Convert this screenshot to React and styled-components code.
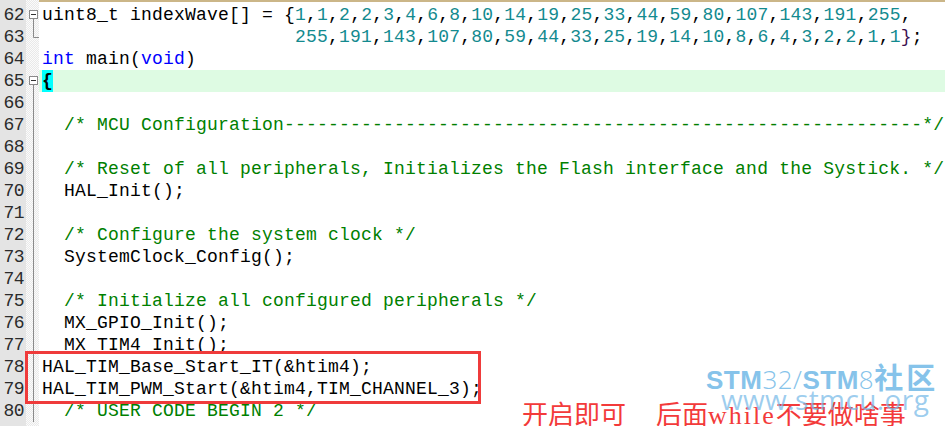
import React from "react";
import styled, { createGlobalStyle } from "styled-components";

const GlobalStyle = createGlobalStyle`
  html, body {
    margin: 0;
    padding: 0;
    background: #ffffff;
    overflow: hidden;
  }
`;

const Screen = styled.div`
  position: relative;
  width: 945px;
  height: 426px;
  overflow: hidden;
  background: #ffffff;
`;

const Editor = styled.div`
  display: flex;
  flex-direction: column;
`;

const Row = styled.div`
  display: flex;
  height: ${({ h }) => h || 22}px;
  font-family: "Liberation Mono", "Courier New", monospace;
  font-size: 18px;
  letter-spacing: 0.2px;
  line-height: 22px;
`;

const LineNo = styled.div`
  width: 26px;
  flex: none;
  box-sizing: border-box;
  padding-right: 2px;
  text-align: right;
  color: #2b2b2b;
  background: #e4e4e4;
  letter-spacing: -0.5px;
`;

const FoldCell = styled.div`
  width: 13px;
  flex: none;
  display: flex;
  background: repeating-conic-gradient(#e9e9e9 0 25%, #fbfbfb 0 50%) 0 0 / 2px 2px;
`;

const Code = styled.div`
  flex: 1;
  padding-left: 3px;
  white-space: pre;
  color: #000000;
  background: ${({ current }) => (current ? "#defbe3" : "#ffffff")};
  border-top: ${({ top }) => (top ? "2px solid #cbb688" : "none")};
`;

const Kw = styled.span`
  color: #0000ff;
`;

const Num = styled.span`
  color: #138a8f;
`;

const Cm = styled.span`
  color: #008000;
`;

const Close = styled.span`
  color: #3c1050;
`;

const Match = styled.span`
  display: inline-block;
  height: 22px;
  font-weight: bold;
  background: #00ffff;
`;

const Mark = styled.div`
  position: absolute;
  left: 25px;
  top: 351px;
  width: 456px;
  height: 53px;
  box-sizing: border-box;
  border: 3px solid #ef3b3b;
`;

const Note = styled.div`
  position: absolute;
  left: 522px;
  top: 399px;
  display: flex;
  align-items: baseline;
  white-space: pre;
  color: #f33a3a;
  font-family: "Noto Sans CJK SC", sans-serif;
  font-size: 26px;
  line-height: 28px;
  z-index: 1;
`;

const NoteGap = styled.span`
  display: inline-block;
  width: 30px;
`;

const NoteLatin = styled.span`
  font-family: "Liberation Serif", serif;
  font-size: 26px;
  letter-spacing: 2px;
`;

const Watermark = styled.div`
  position: absolute;
  left: 706px;
  top: 362px;
  display: flex;
  flex-direction: column;
  align-items: center;
  color: #86c3ea;
  z-index: 2;
`;

const Brand = styled.div`
  display: flex;
  align-items: baseline;
  font-size: 25px;
  line-height: 28px;
  white-space: pre;
`;

const BrandPart = styled.span`
  font-weight: ${({ bold }) => (bold ? 700 : 300)};
  font-family: ${({ cjk, bold }) =>
    cjk
      ? `"Noto Sans CJK SC", sans-serif`
      : bold
      ? `"Liberation Sans", Arial, sans-serif`
      : `"Open Sans", sans-serif`};
  font-size: ${({ cjk }) => (cjk ? 29 : 26)}px;
  letter-spacing: ${({ cjk }) => (cjk ? 3 : 0.5)}px;
`;

const Site = styled.div`
  margin-top: -7px;
  margin-left: 6px;
  font-family: "Open Sans", Lato, sans-serif;
  font-weight: 400;
  font-size: 28px;
  line-height: 24px;
  letter-spacing: 0.4px;
  color: rgba(120, 186, 232, 0.72);
`;

function Fold({ kind }) {
  if (!kind) return null;
  return (
    <svg width="13" height="22" viewBox="0 0 13 22">
      {kind === "open" && (
        <>
          <rect x="3.5" y="6.5" width="8" height="8" fill="#ffffff" stroke="#8a8a8a" />
          <line x1="5" y1="10.5" x2="10" y2="10.5" stroke="#333333" />
          <line x1="7.5" y1="15" x2="7.5" y2="22" stroke="#8a8a8a" />
        </>
      )}
      {kind === "mid" && <line x1="7.5" y1="0" x2="7.5" y2="22" stroke="#8a8a8a" />}
      {kind === "end" && (
        <path d="M7.5 0 V11.5 H13" fill="none" stroke="#8a8a8a" />
      )}
    </svg>
  );
}

const nums = (s) =>
  s
    .split(/(\d+)/)
    .filter(Boolean)
    .map((t) => (/^\d+$/.test(t) ? ["num", t] : ["p", t]));

const lines = [
  {
    n: 62,
    fold: "open",
    parts: [["p", "uint8_t indexWave[] = {"], ...nums("1,1,2,2,3,4,6,8,10,14,19,25,33,44,59,80,107,143,191,255,")],
  },
  {
    n: 63,
    fold: "end",
    parts: [
      ["p", " ".repeat(23)],
      ...nums("255,191,143,107,80,59,44,33,25,19,14,10,8,6,4,3,2,2,1,1"),
      ["close", "}"],
      ["p", ";"],
    ],
  },
  { n: 64, parts: [["kw", "int"], ["p", " main("], ["kw", "void"], ["p", ")"]] },
  { n: 65, fold: "open", current: true, parts: [["match", "{"]] },
  { n: 66, parts: [] },
  { n: 67, parts: [["p", "  "], ["cm", "/* MCU Configuration" + "-".repeat(58) + "*/"]] },
  { n: 68, parts: [] },
  {
    n: 69,
    parts: [["p", "  "], ["cm", "/* Reset of all peripherals, Initializes the Flash interface and the Systick. */"]],
  },
  { n: 70, parts: [["p", "  HAL_Init();"]] },
  { n: 71, parts: [] },
  { n: 72, parts: [["p", "  "], ["cm", "/* Configure the system clock */"]] },
  { n: 73, parts: [["p", "  SystemClock_Config();"]] },
  { n: 74, parts: [] },
  { n: 75, parts: [["p", "  "], ["cm", "/* Initialize all configured peripherals */"]] },
  { n: 76, parts: [["p", "  MX_GPIO_Init();"]] },
  { n: 77, parts: [["p", "  MX_TIM4_Init();"]] },
  { n: 78, parts: [["p", "HAL_TIM_Base_Start_IT(&htim4);"]] },
  { n: 79, parts: [["p", "HAL_TIM_PWM_Start(&htim4,TIM_CHANNEL_3);"]] },
  { n: 80, parts: [["p", "  "], ["cm", "/* USER CODE BEGIN 2 */"]] },
  { n: "", parts: [] },
];

function Token({ kind, text }) {
  if (kind === "kw") return <Kw>{text}</Kw>;
  if (kind === "num") return <Num>{text}</Num>;
  if (kind === "cm") return <Cm>{text}</Cm>;
  if (kind === "close") return <Close>{text}</Close>;
  if (kind === "match") return <Match>{text}</Match>;
  return text;
}

function App() {
  return (
    <>
      <GlobalStyle />
      <Screen>
        <Editor>
          <Row h={4}>
            <LineNo />
            <FoldCell />
            <Code top />
          </Row>
          {lines.map((line, i) => (
            <Row key={i}>
              <LineNo>{line.n}</LineNo>
              <FoldCell>
                <Fold kind={line.fold || (line.n > 65 ? "mid" : null)} />
              </FoldCell>
              <Code current={line.current}>
                {line.parts.map(([kind, text], j) => (
                  <Token key={j} kind={kind} text={text} />
                ))}
              </Code>
            </Row>
          ))}
        </Editor>

        <Mark />

        <Note>
          <span>开启即可</span>
          <NoteGap />
          <span>后面</span>
          <NoteLatin>while</NoteLatin>
          <span>不要做啥事</span>
        </Note>

        <Watermark>
          <Brand>
            <BrandPart bold>STM</BrandPart>
            <BrandPart>32/</BrandPart>
            <BrandPart bold>STM</BrandPart>
            <BrandPart>8</BrandPart>
            <BrandPart bold cjk>
              社区
            </BrandPart>
          </Brand>
          <Site>www.stmcu.org</Site>
        </Watermark>
      </Screen>
    </>
  );
}

export default App;
